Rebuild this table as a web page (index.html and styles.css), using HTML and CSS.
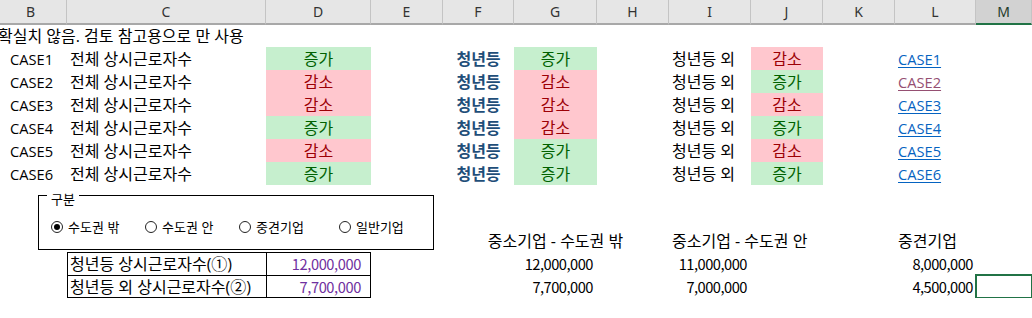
FILE: index.html
```html
<!DOCTYPE html>
<html lang="ko">
<head>
<meta charset="utf-8">
<title>Sheet</title>
<link rel="stylesheet" href="styles.css">
</head>
<body>
<div class="sheet">
  <div class="row hdr">
    <div class="h">B</div><div class="h">C</div><div class="h">D</div><div class="h">E</div>
    <div class="h">F</div><div class="h">G</div><div class="h">H</div><div class="h">I</div>
    <div class="h">J</div><div class="h">K</div><div class="h">L</div><div class="h sel">M</div>
  </div>

  <div class="row r22">
    <div class="cell b txt note">확실치 않음. 검토 참고용으로 만 사용</div>
  </div>

  <div class="row">
    <div class="cell b case">CASE1</div>
    <div class="cell c txt">전체 상시근로자수</div>
    <div class="cell d ctr up">증가</div>
    <div class="cell f ctr youth">청년등</div>
    <div class="cell g ctr up">증가</div>
    <div class="cell i txt">청년등 외</div>
    <div class="cell j ctr down">감소</div>
    <div class="cell l txt"><a class="link" href="#case1">CASE1</a></div>
  </div>
  <div class="row">
    <div class="cell b case">CASE2</div>
    <div class="cell c txt">전체 상시근로자수</div>
    <div class="cell d ctr down">감소</div>
    <div class="cell f ctr youth">청년등</div>
    <div class="cell g ctr down">감소</div>
    <div class="cell i txt">청년등 외</div>
    <div class="cell j ctr up">증가</div>
    <div class="cell l txt"><a class="link visited" href="#case2">CASE2</a></div>
  </div>
  <div class="row">
    <div class="cell b case">CASE3</div>
    <div class="cell c txt">전체 상시근로자수</div>
    <div class="cell d ctr down">감소</div>
    <div class="cell f ctr youth">청년등</div>
    <div class="cell g ctr down">감소</div>
    <div class="cell i txt">청년등 외</div>
    <div class="cell j ctr down">감소</div>
    <div class="cell l txt"><a class="link" href="#case3">CASE3</a></div>
  </div>
  <div class="row">
    <div class="cell b case">CASE4</div>
    <div class="cell c txt">전체 상시근로자수</div>
    <div class="cell d ctr up">증가</div>
    <div class="cell f ctr youth">청년등</div>
    <div class="cell g ctr down">감소</div>
    <div class="cell i txt">청년등 외</div>
    <div class="cell j ctr up">증가</div>
    <div class="cell l txt"><a class="link" href="#case4">CASE4</a></div>
  </div>
  <div class="row">
    <div class="cell b case">CASE5</div>
    <div class="cell c txt">전체 상시근로자수</div>
    <div class="cell d ctr down">감소</div>
    <div class="cell f ctr youth">청년등</div>
    <div class="cell g ctr up">증가</div>
    <div class="cell i txt">청년등 외</div>
    <div class="cell j ctr down">감소</div>
    <div class="cell l txt"><a class="link" href="#case5">CASE5</a></div>
  </div>
  <div class="row">
    <div class="cell b case">CASE6</div>
    <div class="cell c txt">전체 상시근로자수</div>
    <div class="cell d ctr up">증가</div>
    <div class="cell f ctr youth">청년등</div>
    <div class="cell g ctr up">증가</div>
    <div class="cell i txt">청년등 외</div>
    <div class="cell j ctr up">증가</div>
    <div class="cell l txt"><a class="link" href="#case6">CASE6</a></div>
  </div>

  <div class="row band">
    <fieldset class="group">
      <legend>구분</legend>
      <div class="radios">
        <label class="radio w1"><span class="dot on"></span>수도권 밖</label>
        <label class="radio w1"><span class="dot"></span>수도권 안</label>
        <label class="radio w2"><span class="dot"></span>중견기업</label>
        <label class="radio"><span class="dot"></span>일반기업</label>
      </div>
    </fieldset>
    <div class="cell g ctr r3">중소기업 - 수도권 밖</div>
    <div class="cell i txt r3">중소기업 - 수도권 안</div>
    <div class="cell l txt r3">중견기업</div>
  </div>

  <div class="row">
    <div class="cell c tbl lbl">청년등 상시근로자수(①)</div>
    <div class="cell d tbl tr val">12,000,000</div>
    <div class="cell g num">12,000,000</div>
    <div class="cell i num">11,000,000</div>
    <div class="cell l num nl">8,000,000</div>
  </div>
  <div class="row">
    <div class="cell c tbl lbl last lastl">청년등 외 상시근로자수(②)</div>
    <div class="cell d tbl tr last val">7,700,000</div>
    <div class="cell g num">7,700,000</div>
    <div class="cell i num">7,000,000</div>
    <div class="cell l num nl">4,500,000</div>
    <div class="cell m selected"></div>
  </div>
</div>
</body>
</html>
```
FILE: styles.css
```css
html, body {
  margin: 0;
  background: #fff;
  overflow: hidden;
}
body {
  font-family: "Open Sans", "Noto Sans CJK KR", sans-serif;
  font-size: 16px;
  color: #000;
}
.sheet {
  margin-left: -5px;
  width: 1037px;
}
.row {
  display: grid;
  grid-template-columns: 72px 199px 105px 72px 71px 83px 72px 82px 72px 72px 81px 1fr;
  height: 23px;
}
.r22 { height: 22px; }

/* column header */
.hdr { height: 25px; }
.h {
  box-sizing: border-box;
  background: #e6e6e6;
  border-right: 1px solid #c4c4c4;
  border-bottom: 2px solid #a8a8a8;
  display: flex;
  align-items: center;
  justify-content: center;
  font-family: "Noto Sans", sans-serif;
  font-size: 14px;
  color: #333;
}
.h.sel {
  background: #d2d2d2;
  border-bottom-color: #217346;
  color: #1f3a2a;
}

/* cells */
.cell {
  box-sizing: border-box;
  display: flex;
  align-items: center;
  white-space: nowrap;
  min-width: 0;
  line-height: 18px;
}
.b { grid-column: 1; }
.c { grid-column: 2; }
.d { grid-column: 3; }
.e { grid-column: 4; }
.f { grid-column: 5; }
.g { grid-column: 6; }
.i { grid-column: 8; }
.j { grid-column: 9; }
.k { grid-column: 10; }
.l { grid-column: 11; }
.m { grid-column: 12; }

.txt { padding-left: 3px; }
.note { grid-column: 1 / 5; }
.case { padding-left: 15px; font-size: 14.67px; }
.ctr { justify-content: center; }
.up { background: #c6efce; color: #006100; }
.down { background: #ffc7ce; color: #9c0006; }
.youth { color: #1f4e79; font-weight: 700; }

.link {
  font-size: 14.67px;
  color: #0563c1;
  text-decoration: underline;
  text-underline-offset: 2px;
}
.link.visited { color: #954f72; }

/* group box band (rows 8-10) */
.band {
  height: 67px;
  grid-template-rows: 22px 22px 23px;
}
.r3 { grid-row: 3; }
.group {
  grid-column: 1 / 7;
  grid-row: 1 / 4;
  align-self: start;
  justify-self: start;
  box-sizing: border-box;
  width: 396px;
  height: 65px;
  margin: 0 0 0 43px;
  padding: 0;
  min-width: 0;
  border: 1px solid #000;
  font-family: "Noto Sans CJK KR", sans-serif;
  font-size: 13px;
  color: #000;
}
.group legend {
  margin-left: 8px;
  padding: 8px 4px 0;
  line-height: 12px;
}
.radios {
  display: flex;
  align-items: center;
  height: 14px;
  margin: 15px 0 0 12px;
  line-height: 14px;
}
.radio {
  display: flex;
  align-items: center;
  gap: 5px;
  width: 95px;
}
.radio.w2 { width: 101px; }
.dot {
  position: relative;
  box-sizing: border-box;
  width: 12px;
  height: 12px;
  border: 1px solid #222;
  border-radius: 50%;
  background: #fff;
  flex: none;
}
.dot.on::after {
  content: "";
  position: absolute;
  inset: 2px;
  border-radius: 50%;
  background: #000;
}

/* bottom table */
.tbl {
  border-top: 1px solid #000;
  border-left: 1px solid #000;
}
.tr { border-right: 1px solid #000; }
.last { border-bottom: 1px solid #000; }
.lastl { box-shadow: 0 1px 0 #000; }
.lbl { padding-left: 2px; }
.val {
  justify-content: flex-end;
  padding-right: 9px;
  color: #7030a0;
  font-family: "Noto Sans CJK KR", sans-serif;
  font-size: 14.67px;
  letter-spacing: -0.4px;
}
.num {
  justify-content: flex-end;
  padding-right: 4px;
  font-family: "Noto Sans CJK KR", sans-serif;
  font-size: 14.67px;
  letter-spacing: -0.5px;
}
.num.nl { padding-right: 3px; }
.selected {
  outline: 2px solid #217346;
  outline-offset: -1px;
}
```
